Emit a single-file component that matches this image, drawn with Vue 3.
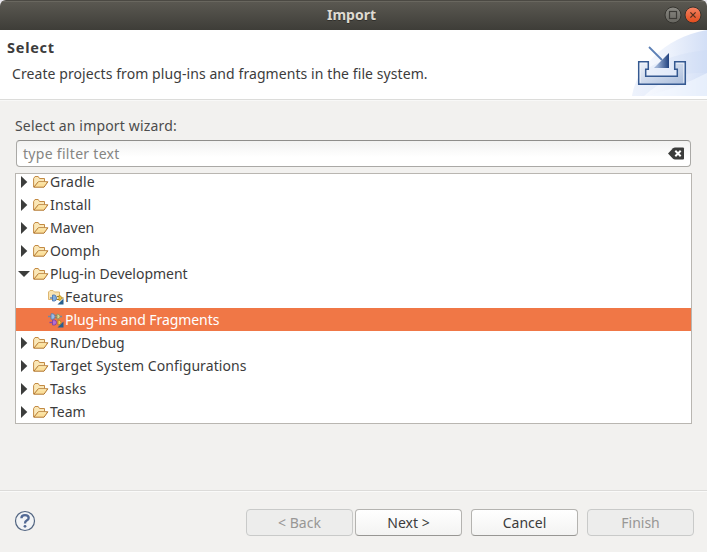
<script setup>
const rows = [
  { label: 'Gradle', kind: 'folder', spacing: 0.2 },
  { label: 'Install', kind: 'folder', spacing: 0.15 },
  { label: 'Maven', kind: 'folder', spacing: 0 },
  { label: 'Oomph', kind: 'folder', spacing: 0.1 },
  { label: 'Plug-in Development', kind: 'folder', open: true, spacing: -0.02 },
  { label: 'Features', kind: 'feature', spacing: 0.2 },
  { label: 'Plug-ins and Fragments', kind: 'plugin', selected: true, spacing: -0.07 },
  { label: 'Run/Debug', kind: 'folder', spacing: -0.06 },
  { label: 'Target System Configurations', kind: 'folder', spacing: 0.09 },
  { label: 'Tasks', kind: 'folder', spacing: 0.2 },
  { label: 'Team', kind: 'folder', spacing: 0 },
]
</script>

<template>
  <main class="window">
    <header class="titlebar">
      <span class="window-title">Import</span>
      <svg class="controls" width="40" height="20" viewBox="0 0 40 20">
        <defs>
          <linearGradient id="gray" x2="0" y2="1"><stop stop-color="#8b8a84"/><stop offset="1" stop-color="#66655f"/></linearGradient>
          <linearGradient id="red" x2="0" y2="1"><stop stop-color="#f58363"/><stop offset="1" stop-color="#e24c1c"/></linearGradient>
        </defs>
        <circle cx="10" cy="10" r="8" fill="url(#gray)" stroke="#35342f"/>
        <rect x="6.5" y="6.5" width="7" height="7" fill="none" stroke="#3c3b37" stroke-width="1.2"/>
        <circle cx="30" cy="10" r="8" fill="url(#red)" stroke="#35342f"/>
        <path d="M27.4 7.4l5.2 5.2M32.6 7.4l-5.2 5.2" stroke="#54301f" stroke-width="1.3"/>
      </svg>
    </header>

    <section class="banner">
      <div class="banner-text">
        <h1>Select</h1>
        <p>Create projects from plug-ins and fragments in the file system.</p>
      </div>
      <svg class="banner-art" width="75" height="66" viewBox="0 0 75 66">
        <defs>
          <linearGradient id="sky"><stop stop-color="#fbfcff"/><stop offset=".5" stop-color="#edf2fc"/><stop offset="1" stop-color="#d3dff6"/></linearGradient>
          <linearGradient id="tray" x2="1" y2="1"><stop stop-color="#f0f4fb"/><stop offset="1" stop-color="#a9bcdb"/></linearGradient>
          <linearGradient id="head"><stop offset=".2" stop-color="#9db2d6"/><stop offset="1" stop-color="#21427f"/></linearGradient>
        </defs>
        <path d="M0 66C4 40 30 8 75 0V66Z" fill="url(#sky)"/>
        <path d="M8 44C28 28 50 23 75 20V43C49 41 30 50 12 66H0Q2 54 8 44Z" fill="#c8d7f2" opacity=".25"/>
        <path d="M15 66Q48 57 75 43V66Z" fill="#f4f8ff" opacity=".6"/>
        <path d="M6.7 31.7H16.3V39.3H13.7V46.3H45.3V39.3H42.7V31.7H53.3V54.3H6.7Z" fill="url(#tray)" stroke="#355991" stroke-width="1.5"/>
        <path d="M8.3 52.7V33.3H14.8M44.3 33.3H51.7V52.7" fill="none" stroke="#f2f6fc" opacity=".7"/>
        <path d="M17 17L30 30" stroke="#5d80b6" stroke-width="1.8"/>
        <path d="M37 23V38H22Z" fill="url(#head)"/>
      </svg>
    </section>

    <section class="content">
      <div class="prompt">Select an import wizard:</div>
      <div class="filter">
        <span>type filter text</span>
        <svg width="17" height="13" viewBox="0 0 17 13">
          <path d="M0 6.5L5 1.2Q5.8.5 7 .5H15Q16 .5 16 1.5V11.5Q16 12.5 15 12.5H7Q5.8 12.5 5 11.8Z" fill="#3c3d3c"/>
          <path d="M7.3 3.8L12.7 9.2M12.7 3.8L7.3 9.2" stroke="#fff" stroke-width="2"/>
        </svg>
      </div>
      <div class="tree">
        <div class="tree-rows">
          <div v-for="row in rows" :key="row.label" class="row" :class="[row.kind, { selected: row.selected }]">
            <svg v-if="row.kind === 'folder'" class="arrow" width="12" height="12" viewBox="0 0 12 12">
              <path :d="row.open ? 'M0 3H12L6 9Z' : 'M3 0V12L9.3 6Z'" fill="#3c3d3c"/>
            </svg>
            <svg v-if="row.kind === 'folder'" class="icon" width="16" height="16" viewBox="0 0 16 16">
              <path d="M.6 13V4.5L2 2.5H5.2L6.5 4.5H11.5V7.5" fill="#fae7b7" stroke="#c38a43"/>
              <path d="M.8 13.2L5.3 7.8H14.9L11 13.2Z" fill="#fbdf9b" stroke="#b17630" stroke-linejoin="round"/>
              <path d="M5.5 8.8H13" stroke="#fff0bd"/>
            </svg>
            <svg v-else class="icon" width="16" height="16" viewBox="0 0 16 16">
              <template v-if="row.kind === 'feature'">
                <path d="M.5 10.5V3L2 1.5H5L6.5 3H11.5V10.5Z" fill="#f8e3b2" stroke="#ddb671"/>
                <path d="M2 9H5" stroke="#5d85b9" stroke-width="1.4"/>
                <path d="M4.5 6H6.5Q8.5 6.5 8.5 9Q8.5 12 6.5 12H4.5Z" fill="#83addd" stroke="#416fac" stroke-width=".8"/>
                <path d="M9 7.5H11M9 10.5H11" stroke="#a37c1c"/>
                <path d="M11 6.5Q13.5 6.5 13.5 9Q13.5 11.5 11 11.5Z" fill="#f6cf44" stroke="#b28923" stroke-width=".8"/>
                <path d="M13.5 9H15.5" stroke="#b28923" stroke-width="1.3"/>
              </template>
              <template v-else>
                <path d="M0 4.5H3M12 4.5H14" stroke="#7186a5" stroke-width="1.4"/>
                <path d="M3 1.8H5Q7 2.2 7 4.5Q7 7 5 7.2H3Z" fill="#9bbde4" stroke="#5879aa" stroke-width=".8"/>
                <path d="M7 3.3H9M7 5.7H9" stroke="#7a8264"/>
                <path d="M9 2Q12 2 12 4.5Q12 7 9 7Z" fill="#d7d58a" stroke="#8c9063" stroke-width=".8"/>
                <path d="M1.5 10.5H4.5" stroke="#8446aa" stroke-width="1.4"/>
                <path d="M4.5 8H6.5Q8.5 8.2 8.5 10.5Q8.5 13 6.5 13H4.5Z" fill="#b66cd2" stroke="#7641a0" stroke-width=".8"/>
                <path d="M10 8Q13 8 13 10.5Q13 13 10 13Z" fill="#f6cf44" stroke="#ac7d29" stroke-width=".8"/>
              </template>
              <path d="M15.5 9.5V15.5H9.5Z" fill="#285f8e"/>
            </svg>
            <span class="label" :style="{ letterSpacing: row.spacing + 'px' }">{{ row.label }}</span>
          </div>
        </div>
      </div>
    </section>

    <footer class="footer">
      <svg class="help" width="22" height="22" viewBox="0 0 22 22">
        <circle cx="11" cy="11" r="9.5" fill="#f2f4f6" stroke="#526581" stroke-width="1.2"/>
        <path d="M7.4 8.3Q7.5 5.2 11 5.2Q14.7 5.2 14.7 8Q14.7 9.5 12.7 10.6Q11 11.5 11 13.5" fill="none" stroke="#526994" stroke-width="2.3"/>
        <circle cx="11" cy="16.3" r="1.4" fill="#526994"/>
      </svg>
      <div class="buttons">
        <button class="back" disabled>&lt; Back</button>
        <button class="next">Next &gt;</button>
        <button class="cancel">Cancel</button>
        <button class="finish" disabled>Finish</button>
      </div>
    </footer>
  </main>
</template>

<style>
body { margin: 0; background: #e9e8ee; }
</style>
<style scoped>
* { box-sizing: border-box; }
.window { width: 707px; height: 552px; display: flex; flex-direction: column; background: #f2f1ef; color: #3c3c3c; font-family: "Noto Sans", "Open Sans", sans-serif; font-size: 14px; line-height: 20px; border-radius: 6px 6px 0 0; overflow: hidden; }
.titlebar { height: 30px; flex: none; display: grid; grid-template-columns: 1fr auto 1fr; align-items: center; background: linear-gradient(#5b5952, #3e3d38); border-top: 1px solid #4b4943; box-shadow: inset 0 1px #69675f; }
.window-title { grid-column: 2; color: #dfdbd2; font-weight: 700; text-shadow: 0 1px #302f2b; padding: 0 4px 2px 0; }
.controls { justify-self: end; margin: 0 4px 1px 0; }
.banner { height: 70px; flex: none; background: #fff; border-bottom: 1px solid #dcdcda; display: flex; justify-content: space-between; align-items: flex-start; }
.banner-text { padding: 7px 0 0 7px; }
h1 { margin: 0; font-size: 14.5px; line-height: 20px; font-weight: 700; letter-spacing: .75px; }
p { margin: 7px 0 0 5px; white-space: nowrap; letter-spacing: .08px; }
.content { height: 390px; flex: none; padding: 15px 15px 0; border-top: 1px solid #f8f8f7; }
.prompt { line-height: 20px; color: #4c4c4c; letter-spacing: .17px; }
.filter { height: 27px; margin: 4px 1px 6px; border: 1px solid #aaa9a6; border-top-color: #8f8e8b; border-radius: 4px; background: linear-gradient(#f2f2f1, #fff 65%); display: flex; align-items: center; justify-content: space-between; padding: 0 5px 0 6px; color: #858583; letter-spacing: .3px; }
.tree { height: 251px; border: 1px solid #b9b6b1; background: #fff; overflow: hidden; }
.tree-rows { margin-top: -4px; }
.row { height: 23px; display: flex; align-items: center; padding-left: 2px; white-space: nowrap; }
.row.feature, .row.plugin { padding-left: 32px; }
.icon { margin: 0 1px 0 3px; flex: none; }
.feature .icon, .plugin .icon { margin-left: 0; }
.arrow { flex: none; }
.selected { background: #f07746; color: #fff; }
.footer { flex: 1; border-top: 1px solid #dcdbd9; box-shadow: inset 0 1px #fafaf9; display: flex; align-items: flex-start; justify-content: space-between; padding: 18px 13px 0 14px; }
.help { margin-top: 1px; }
.buttons { display: flex; }
button { width: 107px; height: 27px; padding: 0; border: 1px solid #b4b3b0; border-bottom-color: #989794; border-radius: 4px; background: linear-gradient(#fff, #f3f3f2); color: #3c3c3c; font: inherit; }
button:disabled { background: #ededec; border-color: #c9cac9; color: #989795; }
.back { margin-right: 2px; }
.next, .cancel { margin-right: 9px; }
</style>
